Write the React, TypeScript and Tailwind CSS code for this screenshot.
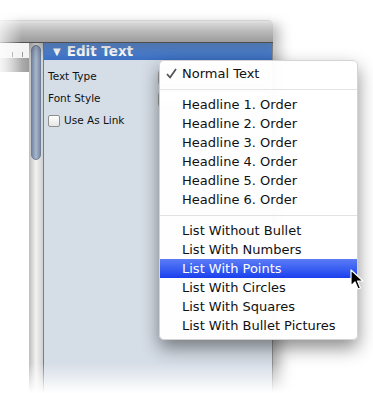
import React from 'react';

const headlines = [1, 2, 3, 4, 5, 6].map(n => `Headline ${n}. Order`);
const lists = [
  'List Without Bullet',
  'List With Numbers',
  'List With Points',
  'List With Circles',
  'List With Squares',
  'List With Bullet Pictures',
];

function MenuItem({ label, active, checked }: { label: string; active?: boolean; checked?: boolean }) {
  return (
    <div
      className={
        'relative h-[19px] pl-[22px] flex items-center text-[13px] leading-none ' +
        (active ? 'bg-gradient-to-b from-[#5c7bf6] to-[#1b3eee] text-white' : 'text-[#111]')
      }
    >
      {checked && (
        <svg className="absolute left-[6px] top-[4px]" width="11" height="11" viewBox="0 0 11 11">
          <path d="M1 6 L4 9.5 L10 1" fill="none" stroke="#555" strokeWidth="1.8" strokeLinejoin="round" />
        </svg>
      )}
      {label}
    </div>
  );
}

function Separator() {
  return (
    <div className="h-[12px] flex items-center">
      <div className="h-px w-full bg-[#e3e3e3]" />
    </div>
  );
}

export default function App() {
  return (
    <div className="relative w-[373px] h-[393px] bg-white overflow-hidden font-['DejaVu_Sans',sans-serif]">
      {/* window */}
      <div className="pt-5 w-[273px] h-[393px] flex flex-col">
        <div className="relative h-[23px] rounded-tr-[5px] bg-gradient-to-b from-[#dedede] via-[#b9b9b9] to-[#9c9c9c] border-t border-[#c8c8c8] border-b border-b-[#4f4f4f] shadow-[6px_4px_14px_rgba(0,0,0,0.3)]" />
        <div className="flex flex-1 shadow-[6px_6px_14px_rgba(0,0,0,0.35)]">
          {/* document edge */}
          <div className="w-[29px] flex flex-col">
            <div className="relative h-[15px] bg-[#f3f3f3]">
              <div className="absolute left-[12px] top-[9px] w-px h-[5px] bg-[#9a9a9a]" />
              <div className="absolute left-[22px] top-[9px] w-px h-[5px] bg-[#9a9a9a]" />
            </div>
            <div className="h-[14px] bg-gradient-to-r from-[#e0e0e0] to-[#9c9c9c]" />
            <div className="flex-1 bg-white" />
          </div>
          {/* scrollbar */}
          <div className="w-[15px] pt-[2px] px-[2px] bg-gradient-to-r from-[#bdbdbd] via-[#f3f3f3] to-[#cfcfcf] border-r border-[#7c7c7c]">
            <div className="h-[115px] rounded-full bg-gradient-to-r from-[#7789a5] via-[#a9b7cb] to-[#7a8ca7] border border-[#6d7f9b]" />
          </div>
          {/* inspector panel */}
          <div className="flex-1 flex flex-col bg-[#d5dde6] border-r border-[#8e8e8e]">
            <div className="h-[17px] flex items-center gap-[6px] pl-[9px] bg-gradient-to-b from-[#6495dc] to-[#3b6fc4] text-white text-[13.5px] font-bold leading-none">
              <span className="text-[10px]">▼</span>
              <span>Edit Text</span>
            </div>
            <div className="pt-[6px] pl-[4px] pr-[3px] text-[10.5px] text-[#111]">
              <div className="h-[22px] flex items-center justify-between">
                <span>Text Type</span>
                <div className="w-[111px] h-[17px] rounded-[4px] bg-gradient-to-b from-white to-[#d8d8d8] border border-[#9c9c9c]" />
              </div>
              <div className="h-[22px] flex items-center justify-between">
                <span>Font Style</span>
                <div className="w-[111px] h-[17px] rounded-[4px] bg-gradient-to-b from-white to-[#d8d8d8] border border-[#9c9c9c]" />
              </div>
              <div className="h-[22px] flex items-center gap-[4px]">
                <div className="w-[12px] h-[12px] rounded-[2px] bg-gradient-to-b from-white to-[#e6e6e6] border border-[#8f8f8f]" />
                <span>Use As Link</span>
              </div>
            </div>
          </div>
        </div>
      </div>

      {/* popup menu */}
      <div className="absolute left-[159px] top-[60px] w-[199px] pt-[3px] pb-[4px] rounded-[5px] bg-white/[0.97] border border-[#d4d4d4] shadow-[0_8px_18px_rgba(0,0,0,0.45)]">
        <MenuItem label="Normal Text" checked />
        <Separator />
        {headlines.map(h => (
          <MenuItem key={h} label={h} />
        ))}
        <Separator />
        {lists.map(l => (
          <MenuItem key={l} label={l} active={l === 'List With Points'} />
        ))}
      </div>

      {/* cursor */}
      <svg className="absolute left-[350px] top-[269px]" width="14" height="22" viewBox="0 0 14 22">
        <path d="M1 1 L1 17 L5 13 L8 20 L10.5 19 L7.5 12 L13 12 Z" fill="#000" stroke="#fff" strokeWidth="1.2" strokeLinejoin="round" />
      </svg>

      {/* fades */}
      <div className="pointer-events-none absolute left-0 top-0 w-[373px] h-[24px] bg-gradient-to-b from-white via-white/60 to-transparent" />
      <div className="pointer-events-none absolute left-0 top-0 w-[22px] h-[393px] bg-gradient-to-r from-white/70 to-transparent" />
      <div className="pointer-events-none absolute left-0 bottom-0 w-[373px] h-[30px] bg-gradient-to-t from-white to-transparent" />
    </div>
  );
}
